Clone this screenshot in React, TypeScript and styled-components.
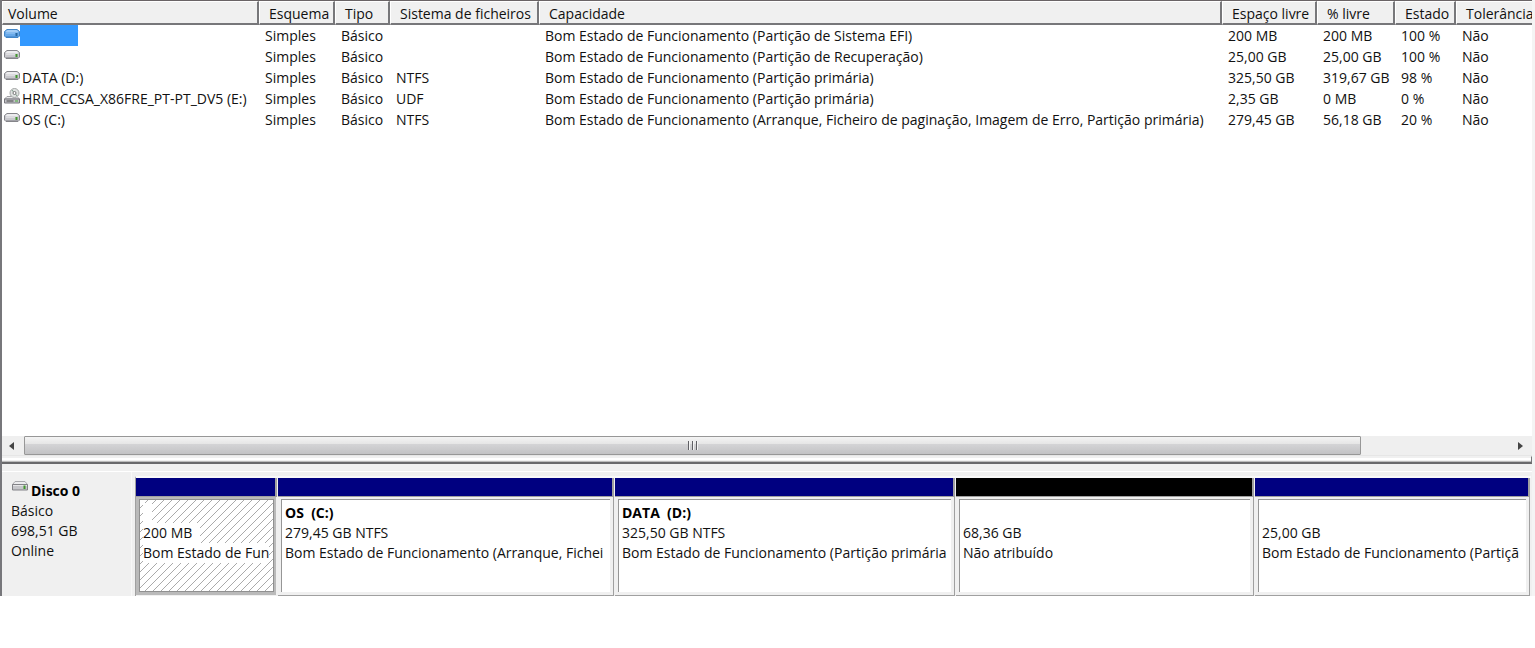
import React from "react";
import styled, { createGlobalStyle, css } from "styled-components";

const GlobalStyle = createGlobalStyle`
  * { box-sizing: border-box; }
  body {
    margin: 0;
    background: #fff;
    color: #111;
    font-family: "Open Sans", "Noto Sans", sans-serif;
    font-size: 14px;
    line-height: 20px;
  }
`;

const Window = styled.main`
  display: flex;
  flex-direction: column;
  background: #f0f0f0;
  border-left: 2px solid #77777b;
  border-right: 3px solid #f4f4f4;
  overflow: hidden;
`;

const VolumePane = styled.section`
  min-height: 436px;
  background: #fff;
  border-top: 1px solid #6a6466;
  overflow: hidden;
`;

const VolumeTable = styled.table`
  width: 100%;
  table-layout: fixed;
  border-collapse: separate;
  border-spacing: 0;
`;

const Column = styled.col<{ $width?: number }>`
  ${(p) => p.$width && css`width: ${p.$width}px;`}
`;

const HeaderCell = styled.th`
  height: 24px;
  padding: 2px 0 0 9px;
  background: #f0f0f0;
  border-top: 1px solid #fff;
  border-left: 1px solid #fff;
  border-right: 2px solid #77777a;
  border-bottom: 2px solid #77777a;
  font-weight: 400;
  line-height: 18px;
  text-align: left;
  white-space: nowrap;
  overflow: hidden;
  &:first-child { padding-left: 5px; }
  &:last-child { border-right: 0; }
`;

const Cell = styled.td`
  height: 21px;
  padding: 0 0 0 6px;
  line-height: 21px;
  white-space: nowrap;
  overflow: hidden;
  &:first-child { padding-left: 2px; }
`;

const VolumeName = styled.div`
  display: flex;
  height: 21px;
`;

const NameText = styled.span<{ $selected?: boolean }>`
  padding-left: 2px;
  ${(p) => p.$selected && css`
    width: 58px;
    background: #3399ff;
  `}
`;

const ScrollBar = styled.div`
  display: flex;
  height: 20px;
  background: #efefef;
  border-bottom: 1px solid #e6e6e6;
`;

const ScrollButton = styled.button`
  display: flex;
  align-items: center;
  justify-content: center;
  width: 22px;
  padding: 0 2px 0 0;
  border: 0;
  background: transparent;
`;

const ScrollTrack = styled.div`
  flex: 1;
`;

const ScrollThumb = styled.div`
  display: flex;
  align-items: center;
  justify-content: center;
  width: 90%;
  height: 19px;
  border: 1px solid #979797;
  border-radius: 1px;
  background: linear-gradient(#f4f4f4, #e6e6e6 40%, #d4d4d6 42%, #c2c2c4);
`;

const Splitter = styled.div`
  height: 8px;
  border-top: 1px solid #f0f0f0;
  border-right: 1px solid #77777a;
  border-bottom: 2px solid #69696b;
  background: linear-gradient(#f0f0f0 1px, #fff 1px, #fff 3px, #f0f0f0 3px, #f0f0f0 4px, #bbb 4px);
`;

const DiskPane = styled.section`
  display: flex;
  margin-top: 7px;
  border-top: 1px solid #fff;
`;

const DiskLabel = styled.div`
  width: 130px;
  padding: 9px 0 0 9px;
  border-right: 1px solid #f8f8f8;
`;

const DiskTitle = styled.h2`
  display: flex;
  gap: 3px;
  margin: 0;
  padding-left: 1px;
  font-size: 14px;
  font-weight: 700;
  line-height: 20px;
  color: #000;
`;

const DiskLine = styled.div`
  line-height: 20px;
`;

const Partitions = styled.div`
  flex: 1;
  min-width: 0;
  display: grid;
  grid-template-columns: 142fr 337fr 341fr 299fr 276fr;
  margin: 4px 1px 0 3px;
  border-left: 1px solid #a0a0a0;
  border-top: 2px solid #fafafa;
`;

const Partition = styled.article`
  display: flex;
  flex-direction: column;
  min-width: 0;
`;

const PartitionBar = styled.div<{ $free?: boolean }>`
  height: 19px;
  background: ${(p) => (p.$free ? "#000" : "#000080")};
  border-right: 2px solid #a0a0a0;
  border-bottom: 1px solid #a0a0a0;
  margin-right: 1px;
`;

const PartitionFrame = styled.div<{ $selected?: boolean }>`
  height: 99px;
  margin-right: 1px;
  padding: 2px 3px 3px 3px;
  border-right: 1px solid #a0a0a0;
  border-bottom: 1px solid #a0a0a0;
  background: #f0f0f0;
  ${(p) => p.$selected && css`
    padding: 2px 2px 3px 3px;
    border-color: #f0f0f0;
    background: #bababa;
  `}
`;

const PartitionBody = styled.div<{ $selected?: boolean }>`
  height: 100%;
  padding: 3px 4px 0 3px;
  border-top: 1px solid #969696;
  border-left: 1px solid #969696;
  background: #fff;
  overflow: hidden;
  ${(p) => p.$selected && css`
    padding: 3px 3px 0 3px;
    border: 1px solid #909090;
    background: linear-gradient(135deg, #fff 44%, #aaa 47%, #aaa 53%, #fff 56%) 0 0 / 8px 8px;
  `}
`;

const PartitionLine = styled.div<{ $bold?: boolean }>`
  width: fit-content;
  max-width: 100%;
  min-width: 9px;
  height: 20px;
  line-height: 20px;
  font-weight: ${(p) => (p.$bold ? 700 : 400)};
  color: ${(p) => (p.$bold ? "#000" : "inherit")};
  background: #fff;
  white-space: pre;
  overflow: hidden;
`;

const Icon = styled.svg`
  flex: none;
  width: 16px;
  height: 20px;
`;

function DiskIcon() {
  return (
    <Icon viewBox="0 0 16 20" aria-hidden="true">
      <path d="M3 .5h10l2.500 3H.5z" fill="#ececee" stroke="#a9a9ad" />
      <path d="M.5 3.500h15v5.500H.5z" fill="#c6c6ca" stroke="#828287" />
      <path d="M1 4.500h14" stroke="#e6e6e8" />
      <path d="M12.500 4.500v3.500" stroke="#40962d" strokeWidth="2" />
    </Icon>
  );
}

function DriveIcon({ selected, disc }: { selected?: boolean; disc?: boolean }) {
  const edge = selected ? "#4285c6" : "#85858a";
  const top = selected ? "#a4cdf5" : "#ececee";
  const side = selected ? "#68a9e9" : "#c9c9ce";
  if (disc) {
    return (
      <Icon viewBox="0 0 16 20" aria-hidden="true">
        <path d="M3 8.500h10l2.500 2.500H.5z" fill="#e8e8ea" stroke="#a0a0a4" />
        <path d="M.5 11h15v4H.5z" fill="#c2c2c7" stroke="#77777c" />
        <path d="M2.500 13h7" stroke="#444" />
        <path d="M11 13h3" stroke="#48ad38" />
        <circle cx="10.500" cy="5" r="4.500" fill="#dfe3e1" stroke="#a3a6a5" />
        <path d="M8 2l1.500 2M13 8l-1.500-2" stroke="#7fa08c" fill="none" />
        <circle cx="10.500" cy="5" r="1.500" fill="#fff" stroke="#777" />
      </Icon>
    );
  }
  return (
    <Icon viewBox="0 0 16 20" aria-hidden="true">
      <path d="M3 4.500h10l2.500 2v4.500l-1.500 1.500H2L.5 11V6.500z" fill={side} stroke={edge} />
      <path d="M3.500 5h9l2 1.500-1 1h-11l-1-1z" fill={top} />
      <path d="M2 8.500h9" stroke={selected ? "#82baf0" : "#dddde0"} />
      <path d="M2 11.500h12" stroke={selected ? "#4e92d6" : "#a2a2a8"} />
      <path d="M12.500 8v3" stroke={selected ? "#28669e" : "#40962d"} strokeWidth="2" />
    </Icon>
  );
}

const columns: { label: string; width?: number }[] = [
  { label: "Volume", width: 257 },
  { label: "Esquema", width: 76 },
  { label: "Tipo", width: 55 },
  { label: "Sistema de ficheiros", width: 149 },
  { label: "Capacidade" },
  { label: "Espaço livre", width: 95 },
  { label: "% livre", width: 78 },
  { label: "Estado", width: 61 },
  { label: "Tolerância", width: 76 },
];

const OK = "Bom Estado de Funcionamento";

const volumes = [
  { name: "", fs: "", status: `${OK} (Partição de Sistema EFI)`, size: "200 MB", free: "200 MB", pct: "100 %", selected: true },
  { name: "", fs: "", status: `${OK} (Partição de Recuperação)`, size: "25,00 GB", free: "25,00 GB", pct: "100 %" },
  { name: "DATA (D:)", fs: "NTFS", status: `${OK} (Partição primária)`, size: "325,50 GB", free: "319,67 GB", pct: "98 %" },
  { name: "HRM_CCSA_X86FRE_PT-PT_DV5 (E:)", fs: "UDF", status: `${OK} (Partição primária)`, size: "2,35 GB", free: "0 MB", pct: "0 %", disc: true },
  { name: "OS (C:)", fs: "NTFS", status: `${OK} (Arranque, Ficheiro de paginação, Imagem de Erro, Partição primária)`, size: "279,45 GB", free: "56,18 GB", pct: "20 %" },
];

const partitions = [
  { name: "", size: "200 MB  ", status: "Bom Estado de Fun", selected: true },
  { name: "OS  (C:)", size: "279,45 GB NTFS", status: `${OK} (Arranque, Fichei` },
  { name: "DATA  (D:)", size: "325,50 GB NTFS", status: `${OK} (Partição primária` },
  { name: "", size: "68,36 GB", status: "Não atribuído", unallocated: true },
  { name: "", size: "25,00 GB", status: `${OK} (Partiçã` },
];

export default function App() {
  return (
    <>
      <GlobalStyle />
      <Window>
        <VolumePane>
          <VolumeTable>
            <colgroup>
              {columns.map((c) => <Column key={c.label} $width={c.width} />)}
            </colgroup>
            <thead>
              <tr>
                {columns.map((c) => <HeaderCell key={c.label} scope="col">{c.label}</HeaderCell>)}
              </tr>
            </thead>
            <tbody>
              {volumes.map((v, i) => (
                <tr key={i} aria-selected={v.selected}>
                  <Cell>
                    <VolumeName>
                      <DriveIcon selected={v.selected} disc={v.disc} />
                      <NameText $selected={v.selected}>{v.name}</NameText>
                    </VolumeName>
                  </Cell>
                  <Cell>Simples</Cell>
                  <Cell>Básico</Cell>
                  <Cell>{v.fs}</Cell>
                  <Cell>{v.status}</Cell>
                  <Cell>{v.size}</Cell>
                  <Cell>{v.free}</Cell>
                  <Cell>{v.pct}</Cell>
                  <Cell>Não</Cell>
                </tr>
              ))}
            </tbody>
          </VolumeTable>
        </VolumePane>
        <ScrollBar>
          <ScrollButton aria-label="Deslocar para a esquerda">
            <svg width="6" height="8" viewBox="0 0 6 8"><path d="M5 0v8L0 4z" fill="#444" /></svg>
          </ScrollButton>
          <ScrollTrack>
            <ScrollThumb>
              <svg width="11" height="9" viewBox="0 0 11 9">
                <path d="M1.500 0v9M5.500 0v9M9.500 0v9" stroke="#606064" />
                <path d="M2.500 0v9M6.500 0v9M10.500 0v9" stroke="#f4f4f4" />
              </svg>
            </ScrollThumb>
          </ScrollTrack>
          <ScrollButton aria-label="Deslocar para a direita">
            <svg width="6" height="8" viewBox="0 0 6 8"><path d="M1 0v8l5-4z" fill="#444" /></svg>
          </ScrollButton>
        </ScrollBar>
        <Splitter />
        <DiskPane>
          <DiskLabel>
            <DiskTitle><DiskIcon />Disco 0</DiskTitle>
            <DiskLine>Básico</DiskLine>
            <DiskLine>698,51 GB</DiskLine>
            <DiskLine>Online</DiskLine>
          </DiskLabel>
          <Partitions>
            {partitions.map((p, i) => (
              <Partition key={i}>
                <PartitionBar $free={p.unallocated} />
                <PartitionFrame $selected={p.selected}>
                  <PartitionBody $selected={p.selected}>
                    <PartitionLine $bold>{p.name}</PartitionLine>
                    <PartitionLine>{p.size}</PartitionLine>
                    <PartitionLine>{p.status}</PartitionLine>
                  </PartitionBody>
                </PartitionFrame>
              </Partition>
            ))}
          </Partitions>
        </DiskPane>
      </Window>
    </>
  );
}
